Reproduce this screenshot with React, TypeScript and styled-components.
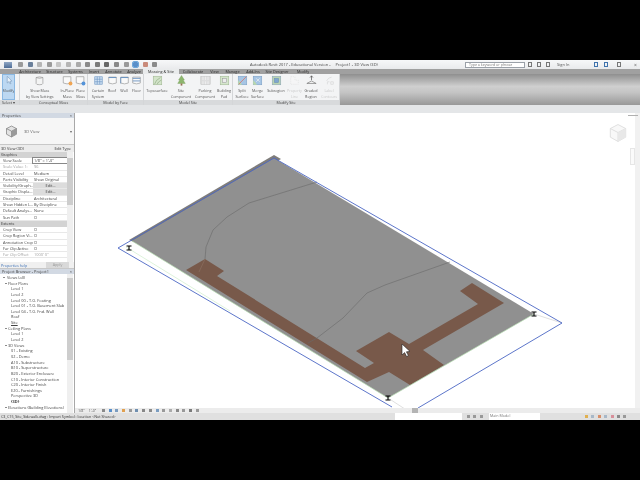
import * as React from "react";
import styled, { createGlobalStyle } from "styled-components";

const Global = createGlobalStyle`
    html, body { margin: 0; padding: 0; background: #000; }
    * { box-sizing: border-box; }
`;

const Screen = styled.div`
    width: 640px;
    height: 480px;
    padding: 60px 0;
    background: #000;
    overflow: hidden;
    font-family: "Open Sans", "Liberation Sans", sans-serif;
    color: #333;
`;
const Win = styled.div`
    height: 360px;
    display: flex;
    flex-direction: column;
    background: #e6e8ea;
    filter: blur(0.3px);
`;

/* title bar */
const TitleBar = styled.div`
    height: 9px;
    display: flex;
    align-items: center;
    background: linear-gradient(#f7f8f9, #e9eaec);
    font-size: 4px;
    white-space: nowrap;
`;
const AppIcon = styled.div`
    width: 8px;
    height: 6px;
    margin: 0 4px;
    background: linear-gradient(#8fa6c4, #4d6c96);
`;
const Quick = styled.div`
    display: flex;
    align-items: center;
    width: 148px;
    height: 7px;
    margin-left: 2px;
`;
const QuickBtn = styled.div<{ $c: string; $on?: boolean }>`
    width: 5px;
    height: 5px;
    border-radius: 1px;
    background: ${({ $c }) => $c};
    margin-right: 4.6px;
    outline: ${({ $on }) => ($on ? "1px solid #6fa8dc" : "none")};
`;
const Title = styled.div`
    width: 128px;
    margin-left: 84px;
    color: #444;
`;
const TitleText = styled.span`
    margin-right: 5px;
`;
const Search = styled.div`
    width: 60px;
    height: 6px;
    margin-left: 87px;
    padding-left: 3px;
    background: #fff;
    border: 1px solid #9aa0a8;
    color: #777;
    font-size: 3.6px;
    line-height: 4px;
    overflow: hidden;
`;
const TopIcons = styled.div`
    display: flex;
    align-items: center;
    margin-left: 3px;
    color: #555;
`;
const TopGlyph = styled.div<{ $c?: string; $gap: number }>`
    width: 4px;
    height: 5px;
    margin-right: ${({ $gap }) => $gap}px;
    border: 1px solid ${({ $c }) => $c ?? "#777"};
`;
const SignIn = styled.span`
    width: 37px;
    font-size: 4px;
`;
const WinClose = styled.span`
    font-size: 5px;
`;

/* tabs */
const Tabs = styled.div`
    height: 5px;
    display: flex;
    padding-left: 16px;
    background: #a0a0a0;
    font-size: 3.8px;
    line-height: 5px;
    white-space: nowrap;
`;
const Tab = styled.div<{ $w: number; $active?: boolean }>`
    width: ${({ $w }) => $w}px;
    text-align: center;
    color: #2b2b2b;
    background: ${({ $active }) => ($active ? "#e9ebec" : "transparent")};
`;

/* ribbon */
const Ribbon = styled.div`
    height: 31px;
    display: flex;
    background: linear-gradient(#8f8f8f 0%, #cfcfcf 40%, #c4c4c4 60%, #989898 100%);
`;
const Panel = styled.div<{ $w: number; $pad: number }>`
    width: ${({ $w }) => $w}px;
    display: flex;
    flex-direction: column;
    background: #f3f4f5;
    border-right: 1px solid #d4d6d8;
    > div:first-child { padding-left: ${({ $pad }) => $pad}px; }
`;
const PanelBody = styled.div`
    height: 26px;
    display: flex;
`;
const PanelTitle = styled.div`
    height: 5px;
    background: #d8dadc;
    font-size: 3.7px;
    line-height: 5px;
    text-align: center;
    color: #444;
    white-space: nowrap;
`;
const SelectTitle = styled(PanelTitle)`
    text-align: left;
    padding-left: 2px;
`;
const RibbonBtn = styled.div<{ $w: number; $active?: boolean; $off?: boolean }>`
    width: ${({ $w }) => $w}px;
    display: flex;
    flex-direction: column;
    align-items: center;
    padding-top: 1px;
    font-size: 3.7px;
    line-height: 5.6px;
    text-align: center;
    white-space: nowrap;
    color: ${({ $off }) => ($off ? "#b5b5b5" : "#555")};
    background: ${({ $active }) => ($active ? "#bcd8f2" : "transparent")};
    outline: ${({ $active }) => ($active ? "1px solid #8ab8e2" : "none")};
    outline-offset: -1px;
    opacity: ${({ $off }) => ($off ? 0.7 : 1)};
    svg { flex: none; margin-bottom: 2px; opacity: 0.88; }
`;

/* strip under the ribbon */
const Strip = styled.div`
    height: 8px;
    background: #e4e6e8;
`;

/* main */
const Main = styled.div`
    height: 300px;
    display: flex;
`;
const Side = styled.div`
    width: 75px;
    display: flex;
    flex-direction: column;
    border-right: 1px solid #a8a8a8;
    background: #f0f0f0;
    font-size: 4.1px;
    white-space: nowrap;
`;
const PaneHead = styled.div`
    height: 5px;
    display: flex;
    justify-content: space-between;
    padding: 0 2px;
    background: #d2d9e3;
    font-size: 3.9px;
    line-height: 5px;
    color: #444;
`;
const Props = styled.div`
    height: 155px;
    display: flex;
    flex-direction: column;
`;
const TypeSel = styled.div`
    height: 27px;
    display: flex;
    align-items: center;
    padding: 0 2px 0 5px;
    background: #f6f6f6;
    border-bottom: 1px solid #c8c8c8;
    color: #666;
    svg { margin-right: 6px; }
`;
const TypeName = styled.span`
    flex: 1;
`;
const InstRow = styled.div`
    height: 7px;
    display: flex;
    justify-content: space-between;
    align-items: center;
    padding: 0 3px 0 1px;
    font-size: 3.9px;
    background: #ececec;
`;
const Grid = styled.div`
    position: relative;
    flex: 1;
    overflow: hidden;
    padding-right: 7px;
    background: #fff;
`;
const Group = styled.div`
    height: 6px;
    padding-left: 1px;
    background: #d3d3d3;
    font-size: 3.9px;
    line-height: 6px;
    color: #333;
`;
const PropRow = styled.div`
    height: 6.3px;
    display: grid;
    grid-template-columns: 30px 1fr;
    line-height: 6.3px;
    font-size: 3.9px;
    padding-left: 3px;
    border-bottom: 0.5px solid #e8e8e8;
`;
const PropLabel = styled.span<{ $off?: boolean }>`
    color: ${({ $off }) => ($off ? "#a0a0a0" : "#444")};
    overflow: hidden;
`;
const PropValue = styled.span<{ $kind?: string }>`
    overflow: hidden;
    padding-left: 1px;
    color: ${({ $kind }) => ($kind === "off" ? "#a0a0a0" : "#444")};
    background: ${({ $kind }) => ($kind === "btn" ? "#dcdcdc" : "#fff")};
    text-align: ${({ $kind }) => ($kind === "btn" ? "center" : "left")};
    outline: ${({ $kind }) => ($kind === "box" ? "0.5px solid #888" : "none")};
`;
const Check = styled.span`
    display: block;
    width: 3px;
    height: 3px;
    margin-top: 1px;
    border: 0.5px solid #c4c4c4;
`;
const VBar = styled.div`
    position: absolute;
    right: 1px;
    top: 0;
    bottom: 0;
    width: 6px;
    background: #efefef;
`;
const VThumb = styled.div<{ $top: number; $h: number }>`
    position: absolute;
    left: 0;
    right: 0;
    top: ${({ $top }) => $top}px;
    height: ${({ $h }) => $h}px;
    background: #cdcdcd;
`;
const PropFoot = styled.div`
    height: 6px;
    display: flex;
    justify-content: space-between;
    align-items: center;
    padding: 0 5px 0 1px;
    background: #f0f0f0;
    font-size: 3.7px;
    color: #3b6fb5;
`;
const Apply = styled.span`
    width: 23px;
    text-align: center;
    background: #d9d9d9;
    color: #999;
    line-height: 6px;
`;
const Divider = styled.div`
    height: 1px;
    background: #c8c8c8;
`;
const Browser = styled.div`
    flex: 1;
    display: flex;
    flex-direction: column;
    min-height: 0;
`;
const Tree = styled.div`
    position: relative;
    flex: 1;
    overflow: hidden;
    padding-top: 1px;
    background: #fff;
`;
const Node = styled.div<{ $pad: number; $bold?: boolean; $under?: boolean }>`
    position: relative;
    height: 5.65px;
    line-height: 5.65px;
    font-size: 3.9px;
    padding-left: ${({ $pad }) => $pad}px;
    color: #444;
    font-weight: ${({ $bold }) => ($bold ? 700 : 400)};
    text-decoration: ${({ $under }) => ($under ? "underline" : "none")};
`;
const Expander = styled.span<{ $left: number }>`
    position: absolute;
    left: ${({ $left }) => $left}px;
    top: 2px;
    width: 2px;
    height: 1px;
    background: #8a8a8a;
`;

const Canvas = styled.div`
    position: relative;
    flex: 1;
    display: flex;
    flex-direction: column;
    background: #fff;
`;
const DrawArea = styled.div`
    height: 295px;
    svg { display: block; }
`;
const NavStrip = styled.div`
    position: absolute;
    right: 0;
    top: 0;
    bottom: 5px;
    width: 5px;
    background: #f1f1f1;
`;
const NavBar = styled.div`
    position: absolute;
    right: 5px;
    top: 35px;
    width: 5px;
    height: 17px;
    background: #fafafa;
    border: 0.5px solid #e6e6e6;
`;
const PaneMark = styled.div`
    position: absolute;
    right: 2px;
    top: 2px;
    width: 10px;
    height: 1px;
    background: #b0b0b0;
`;
const CubeSpot = styled.div`
    position: absolute;
    right: 12px;
    top: 10px;
    opacity: 0.22;
`;
const ViewBar = styled.div`
    position: relative;
    z-index: 1;
    height: 5px;
    display: flex;
    align-items: center;
    padding-left: 3px;
    background: #ececec;
    font-size: 3.6px;
    color: #555;
`;
const Scale = styled.span`
    width: 24px;
`;
const BarIcon = styled.span<{ $c: string }>`
    width: 3px;
    height: 3px;
    margin-right: 3.7px;
    background: ${({ $c }) => $c};
`;
const ScrollKnob = styled.span`
    width: 6px;
    height: 5px;
    margin-left: 210px;
    background: #b4b4b4;
`;

/* status */
const Status = styled.div`
    height: 7px;
    display: flex;
    align-items: center;
    background: #e0e0e0;
    font-size: 3.7px;
    color: #333;
    white-space: nowrap;
`;
const StatusText = styled.span`
    width: 395px;
    padding-left: 1px;
`;
const WhiteField = styled.span<{ $w: number }>`
    width: ${({ $w }) => $w}px;
    height: 7px;
    padding-left: 1px;
    line-height: 6px;
    background: #fff;
    color: #777;
`;
const StatGap = styled.span<{ $w: number }>`
    width: ${({ $w }) => $w}px;
    display: flex;
    align-items: center;
    padding-left: ${({ $w }) => ($w > 30 ? 45 : 5)}px;
`;
const StatIcon = styled.span<{ $c: string }>`
    width: 3px;
    height: 3px;
    margin-right: 3.4px;
    flex: none;
    background: ${({ $c }) => $c};
`;

const mass = "#8b8b8b";
function Glyph({ kind, size = 11 }: { kind: string; size?: number }) {
    const box = (
        <path d="M2.5 3 L2.5 10 Q2.5 11.5 6.5 11.5 Q10.5 11.5 10.5 10 L10.5 3 Z" fill="#f4f4f4" stroke={mass} strokeWidth={0.8} />
    );
    let body: React.ReactNode = null;
    if (kind === "cursor") {
        body = <path d="M5 1.5 L5 9.5 L7 7.8 L8.3 10.5 L9.4 10 L8.2 7.4 L10.6 7.2 Z" fill="#eef5fb" stroke="#6f8fb0" strokeWidth={0.7} />;
    } else if (kind === "mass") {
        body = (
            <>
                {box}
                <path d="M2.5 3 Q6.5 1 10.5 3 Q6.5 5 2.5 3 Z" fill="#dcdcdc" stroke={mass} strokeWidth={0.6} />
            </>
        );
    } else if (kind === "inplace" || kind === "place") {
        body = (
            <>
                <path d="M1.5 2 H10.5 V9.5 Q6 11.5 1.5 9.5 Z" fill="#fafafa" stroke={mass} strokeWidth={0.8} />
                <circle cx={10} cy={10} r={2.3} fill={kind === "inplace" ? "#ef9a3c" : "#3d86d6"} />
            </>
        );
    } else if (kind === "curtain") {
        body = <path d="M2 2 H11 V11 H2 Z M2 5 H11 M2 8 H11 M5 2 V11 M8 2 V11" fill="#cfe2f5" stroke="#4f80b8" strokeWidth={0.7} />;
    } else if (kind === "roof" || kind === "wall") {
        body = (
            <>
                <path d="M2 2.5 H11 V9.5 Q6.5 11.5 2 9.5 Z" fill="#fafafa" stroke={mass} strokeWidth={0.8} />
                <path d="M2 3 H11" stroke="#4f80b8" strokeWidth={1.1} />
                {kind === "wall" && <path d="M2 3 V10" stroke="#4f80b8" strokeWidth={0.9} />}
            </>
        );
    } else if (kind === "floor") {
        body = (
            <>
                <path d="M2 2.5 H11 V9.5 Q6.5 11.5 2 9.5 Z" fill="#fafafa" stroke={mass} strokeWidth={0.8} />
                <path d="M2 4 H11 M2 7 H11" stroke="#4f80b8" strokeWidth={1} />
            </>
        );
    } else if (kind === "topo") {
        body = (
            <>
                <rect x={1.5} y={1.5} width={10} height={10} fill="#cfe2c4" stroke="#97b189" strokeWidth={0.7} />
                <path d="M3 11 Q4 6 10 3 M6 11 Q7 8 11 6" stroke="#7a9b6d" strokeWidth={0.7} fill="none" />
            </>
        );
    } else if (kind === "tree") {
        body = (
            <>
                <path d="M6.5 0.5 L10 6 H8.5 L11 10 H2 L4.5 6 H3 Z" fill="#7fae5c" stroke="#5f8c40" strokeWidth={0.4} />
                <rect x={5.5} y={10} width={2} height={2.5} fill="#8a5d3b" />
            </>
        );
    } else if (kind === "parking") {
        body = (
            <>
                <rect x={1} y={2} width={11} height={9} fill="#dcdcdc" stroke="#b0b0b0" strokeWidth={0.6} />
                <path d="M3.5 2 V6 M6.5 2 V6 M9.5 2 V6 M3.5 7.5 V11 M6.5 7.5 V11 M9.5 7.5 V11" stroke="#f5f5f5" strokeWidth={0.8} />
            </>
        );
    } else if (kind === "pad") {
        body = (
            <>
                <rect x={1.5} y={1.5} width={10} height={10} fill="#d2e5c7" stroke="#97b189" strokeWidth={0.7} />
                <rect x={4} y={4} width={5} height={5} fill="#ececec" stroke="#888" strokeWidth={0.6} />
            </>
        );
    } else if (kind === "split" || kind === "merge") {
        body = (
            <>
                <rect x={1.5} y={1.5} width={10} height={10} fill="#9cbfe2" stroke="#6f96c0" strokeWidth={0.7} />
                <path d="M1.5 11.5 V6 L6 11.5 Z" fill="#b4d6a0" />
                <path d={kind === "split" ? "M2 11 L11 2" : "M5 8 L9 4 M5 4 L9 8"} stroke={kind === "split" ? "#d8604f" : "#f0f0f0"} strokeWidth={0.9} />
            </>
        );
    } else if (kind === "subregion") {
        body = (
            <>
                <rect x={1.5} y={1.5} width={10} height={10} fill="#b3d0aa" stroke="#7f9dad" strokeWidth={0.7} />
                <rect x={4} y={4} width={5} height={5} fill="#6f9bcc" stroke="#4f78a6" strokeWidth={0.5} />
            </>
        );
    } else if (kind === "property") {
        body = <path d="M2 2 H7 V6 H11 V11 H2 Z" fill="#f7f7f7" stroke="#d5d5d5" strokeWidth={0.8} strokeDasharray="1.5 1" />;
    } else if (kind === "graded") {
        body = (
            <>
                <path d="M1 10 L6.5 7 L12 10 Z" fill="#f3f3f3" stroke="#555" strokeWidth={0.7} />
                <path d="M6.5 1 V6 M4.8 3 L6.5 1 L8.2 3" stroke="#333" strokeWidth={0.8} fill="none" />
            </>
        );
    } else if (kind === "label") {
        body = (
            <path d="M3 7 Q5 3 9 2.5 M4 11 V8 H6.5 M8 8 H11 V11 H8 Z" stroke="#c4c4c4" strokeWidth={0.8} fill="none" />
        );
    } else if (kind === "cube") {
        body = (
            <>
                <path d="M6.5 1 L11.5 3.6 V9.2 L6.5 12 L1.5 9.2 V3.6 Z" fill="#e3e3e3" stroke="#666" strokeWidth={0.6} />
                <path d="M1.5 3.6 L6.5 6.2 L11.5 3.6 M6.5 6.2 V12" stroke="#666" strokeWidth={0.6} fill="none" />
                <path d="M6.5 6.2 L11.5 3.6 V9.2 L6.5 12 Z" fill="#9a9a9a" />
            </>
        );
    }
    return (
        <svg width={size} height={size} viewBox="0 0 13 13" fill="none">
            {body}
        </svg>
    );
}

function Marker({ x, y }: { x: number; y: number }) {
    return <path d={`M${x - 2.5} ${y - 2} h5 M${x - 2.5} ${y + 2} h5 M${x} ${y - 2} v4`} stroke="#000" strokeWidth={1.1} />;
}

function SiteDrawing() {
    return (
        <svg width={560} height={295} viewBox="75 113 560 295">
            <path d="M129 240 L274 155 L281 159 L136 243 Z" fill="#7f7d7b" />
            <path d="M132 241 L274 158 L534 314 L388 398 Z" fill="#909090" />
            <path
                d="M186 270 L205 259 L224 271 L217 276 L365 368 L374 363 L356 351 L389 332 L409 344 L478 304 L460 291 L472 283 L504 303 L423 350 L444 365 L410 385 L389 372 L367 382 Z"
                fill="#78594a"
            />
            <path d="M205 259 L199 272" stroke="#8d7263" strokeWidth={0.6} />
            <path d="M317 182 L249 203 L227 217 L213 230 L206 247 L205 259" stroke="#6a6a6a" strokeWidth={0.6} fill="none" />
            <path d="M450 262 L385 285 L367 293 L343 318 L317 338 L308 343" stroke="#6a6a6a" strokeWidth={0.6} fill="none" />
            <path d="M132 241 L388 398 L534 314" stroke="#b7e0b3" strokeWidth={0.7} fill="none" />
            <path d="M126 247 L230 311" stroke="#cfeccb" strokeWidth={0.7} />
            <path d="M534 314 L562 323 M388 398 L408 411" stroke="#c9c9c9" strokeWidth={0.6} />
            <path d="M118 248 L274 158 L562 323 L418 408" stroke="#4b66c4" strokeWidth={0.9} fill="none" />
            <path d="M118 248 L392 407" stroke="#4b66c4" strokeWidth={0.9} fill="none" />
            <Marker x={129} y={248} />
            <Marker x={534} y={314} />
            <Marker x={388} y={398} />
            <path d="M402 344 L402 355 L404.6 352.6 L406.6 356.6 L408.4 355.6 L406.4 351.8 L410 351.4 Z" fill="#fff" stroke="#222" strokeWidth={0.6} />
        </svg>
    );
}

type Btn = { w: number; kind: string; l1: string; l2?: string; off?: boolean };
type PanelDef = { w: number; pad: number; title: string; buttons: Btn[] };

const panels: PanelDef[] = [
    {
        w: 68, pad: 4, title: "Conceptual Mass", buttons: [
            { w: 32, kind: "mass", l1: "Show Mass", l2: "by View Settings" },
            { w: 5, kind: "none", l1: "" },
            { w: 14, kind: "inplace", l1: "In-Place", l2: "Mass" },
            { w: 13, kind: "place", l1: "Place", l2: "Mass" },
        ],
    },
    {
        w: 56, pad: 2, title: "Model by Face", buttons: [
            { w: 16, kind: "curtain", l1: "Curtain", l2: "System" },
            { w: 12, kind: "roof", l1: "Roof" },
            { w: 12, kind: "wall", l1: "Wall" },
            { w: 13, kind: "floor", l1: "Floor" },
        ],
    },
    {
        w: 89, pad: 2, title: "Model Site", buttons: [
            { w: 22, kind: "topo", l1: "Toposurface" },
            { w: 26, kind: "tree", l1: "Site", l2: "Component" },
            { w: 22, kind: "parking", l1: "Parking", l2: "Component" },
            { w: 16, kind: "pad", l1: "Building", l2: "Pad" },
        ],
    },
    {
        w: 107, pad: 1, title: "Modify Site", buttons: [
            { w: 16, kind: "split", l1: "Split", l2: "Surface" },
            { w: 15, kind: "merge", l1: "Merge", l2: "Surface" },
            { w: 22, kind: "subregion", l1: "Subregion" },
            { w: 15, kind: "property", l1: "Property", l2: "Line", off: true },
            { w: 18, kind: "graded", l1: "Graded", l2: "Region" },
            { w: 18, kind: "label", l1: "Label", l2: "Contours", off: true },
        ],
    },
];

const tabs: [string, number, boolean?][] = [
    ["Architecture", 28], ["Structure", 21], ["Systems", 21], ["Insert", 16], ["Annotate", 23],
    ["Analyze", 18], ["Massing & Site", 36, true], ["Collaborate", 28], ["View", 15], ["Manage", 21],
    ["Add-Ins", 20], ["Site Designer", 28], ["Modify", 24],
];

type Row =
    | { group: string }
    | { label: string; value?: string; kind?: string; off?: boolean; check?: boolean };
const rows: Row[] = [
    { group: "Graphics" },
    { label: "View Scale", value: `1/8" = 1'-0"`, kind: "box" },
    { label: "Scale Value   1:", value: "96", kind: "off", off: true },
    { label: "Detail Level", value: "Medium" },
    { label: "Parts Visibility", value: "Show Original" },
    { label: "Visibility/Graph...", value: "Edit...", kind: "btn" },
    { label: "Graphic Displa...", value: "Edit...", kind: "btn" },
    { label: "Discipline", value: "Architectural" },
    { label: "Show Hidden L...", value: "By Discipline" },
    { label: "Default Analys...", value: "None" },
    { label: "Sun Path", check: true },
    { group: "Extents" },
    { label: "Crop View", check: true },
    { label: "Crop Region Vi...", check: true },
    { label: "Annotation Crop", check: true },
    { label: "Far Clip Active", check: true },
    { label: "Far Clip Offset", value: `1000' 0"`, kind: "off", off: true },
];

const treePad = [7, 8, 11];
const tree: [number, string, string?][] = [
    [0, "Views (all)"], [1, "Floor Plans"], [2, "Level 1"], [2, "Level 2"],
    [2, "Level 00 - T.O. Footing"], [2, "Level 01 - T.O. Basement Slab"], [2, "Level 04 - T.O. Fnd. Wall"],
    [2, "Roof"], [2, "Site", "under"], [1, "Ceiling Plans"], [2, "Level 1"], [2, "Level 2"], [1, "3D Views"],
    [2, "01 - Existing"], [2, "02 - Demo"], [2, "A10 - Substructure"], [2, "B10 - Superstructure"],
    [2, "B20 - Exterior Enclosure"], [2, "C10 - Interior Construction"], [2, "C20 - Interior Finish"],
    [2, "E20 - Furnishings"], [2, "Perspective 3D"], [2, "{3D}", "bold"], [1, "Elevations (Building Elevations)"],
];

const quickIcons = ["#9a9a9a", "#6a7f9a", "#b5b5b5", "#9a9a9a", "#c5c5c5", "#b5b5b5", "#aaa", "#8a8a8a", "#7a7a7a", "#666", "#888", "#999", "#5a8fc9", "#c98a7a", "#8a8a8a"];
const barIcons = ["#8a8a8a", "#5a8fc9", "#7a9cc0", "#e0a050", "#999", "#6f8fb0", "#888", "#8a8a8a", "#7a9cc0", "#999", "#aaa", "#888", "#999", "#7a7a7a", "#999"];
const statIcons = ["#e0b050", "#a8b8c8", "#d88f6a", "#a8b8c8", "#d88f9a", "#8a8a8a", "#999"];

export default function App() {
    return (
        <Screen>
            <Global />
            <Win>
                <TitleBar>
                    <AppIcon />
                    <Quick>
                        {quickIcons.map((c, i) => (
                            <QuickBtn key={i} $c={c} $on={i === 12} />
                        ))}
                    </Quick>
                    <Title>
                        <TitleText>Autodesk Revit 2017 - Educational Version -</TitleText>
                        Project1 - 3D View (3D)
                    </Title>
                    <Search>Type a keyword or phrase</Search>
                    <TopIcons>
                        <TopGlyph $gap={5} />
                        <TopGlyph $gap={5} />
                        <TopGlyph $gap={7} />
                        <SignIn>Sign In</SignIn>
                        <TopGlyph $c="#3f73ad" $gap={6} />
                        <TopGlyph $c="#3f73ad" $gap={9} />
                        <TopGlyph $c="#777" $gap={13} />
                        <WinClose>×</WinClose>
                    </TopIcons>
                </TitleBar>
                <Tabs>
                    {tabs.map(([name, w, active]) => (
                        <Tab key={name} $w={w} $active={active}>{name}</Tab>
                    ))}
                </Tabs>
                <Ribbon>
                    <Panel $w={20} $pad={2}>
                        <PanelBody>
                            <RibbonBtn $w={13} $active>
                                <Glyph kind="cursor" />
                                Modify
                            </RibbonBtn>
                        </PanelBody>
                        <SelectTitle>Select ▾</SelectTitle>
                    </Panel>
                    {panels.map((p) => (
                        <Panel key={p.title} $w={p.w} $pad={p.pad}>
                            <PanelBody>
                                {p.buttons.map((b, i) => (
                                    <RibbonBtn key={i} $w={b.w} $off={b.off}>
                                        {b.kind !== "none" && <Glyph kind={b.kind} />}
                                        <span>{b.l1}</span>
                                        <span>{b.l2}</span>
                                    </RibbonBtn>
                                ))}
                            </PanelBody>
                            <PanelTitle>{p.title}</PanelTitle>
                        </Panel>
                    ))}
                </Ribbon>
                <Strip />
                <Main>
                    <Side>
                        <Props>
                            <PaneHead>Properties<span>×</span></PaneHead>
                            <TypeSel>
                                <Glyph kind="cube" size={13} />
                                <TypeName>3D View</TypeName>▾
                            </TypeSel>
                            <InstRow>3D View (3D)<span>Edit Type</span></InstRow>
                            <Grid>
                                {rows.map((r, i) =>
                                    "group" in r ? (
                                        <Group key={i}>{r.group}</Group>
                                    ) : (
                                        <PropRow key={i}>
                                            <PropLabel $off={r.off}>{r.label}</PropLabel>
                                            <PropValue $kind={r.kind}>{r.check ? <Check /> : r.value}</PropValue>
                                        </PropRow>
                                    )
                                )}
                                <VBar><VThumb $top={6} $h={47} /></VBar>
                            </Grid>
                            <PropFoot>Properties help<Apply>Apply</Apply></PropFoot>
                        </Props>
                        <Divider />
                        <Browser>
                            <PaneHead>Project Browser - Project1<span>×</span></PaneHead>
                            <Tree>
                                {tree.map(([lvl, name, flag], i) => (
                                    <Node key={i} $pad={treePad[lvl]} $bold={flag === "bold"} $under={flag === "under"}>
                                        {lvl < 2 && <Expander $left={lvl === 0 ? 3 : 5} />}
                                        {name}
                                    </Node>
                                ))}
                                <VBar><VThumb $top={4} $h={82} /></VBar>
                            </Tree>
                        </Browser>
                    </Side>
                    <Canvas>
                        <DrawArea><SiteDrawing /></DrawArea>
                        <NavStrip />
                        <NavBar />
                        <PaneMark />
                        <CubeSpot><Glyph kind="cube" size={20} /></CubeSpot>
                        <ViewBar>
                            <Scale>1/8" = 1'-0"</Scale>
                            {barIcons.map((c, i) => <BarIcon key={i} $c={c} />)}
                            <ScrollKnob />
                        </ViewBar>
                    </Canvas>
                </Main>
                <Status>
                    <StatusText>C3_C15_Site_Sidewalk.dwg : Import Symbol : location &lt;Not Shared&gt;</StatusText>
                    <WhiteField $w={67} />
                    <StatGap $w={27}>
                        <StatIcon $c="#999" />
                        <StatIcon $c="#999" />
                        <StatIcon $c="#999" />
                    </StatGap>
                    <WhiteField $w={51}>Main Model</WhiteField>
                    <StatGap $w={100}>
                        {statIcons.map((c, i) => <StatIcon key={i} $c={c} />)}
                    </StatGap>
                </Status>
            </Win>
        </Screen>
    );
}
